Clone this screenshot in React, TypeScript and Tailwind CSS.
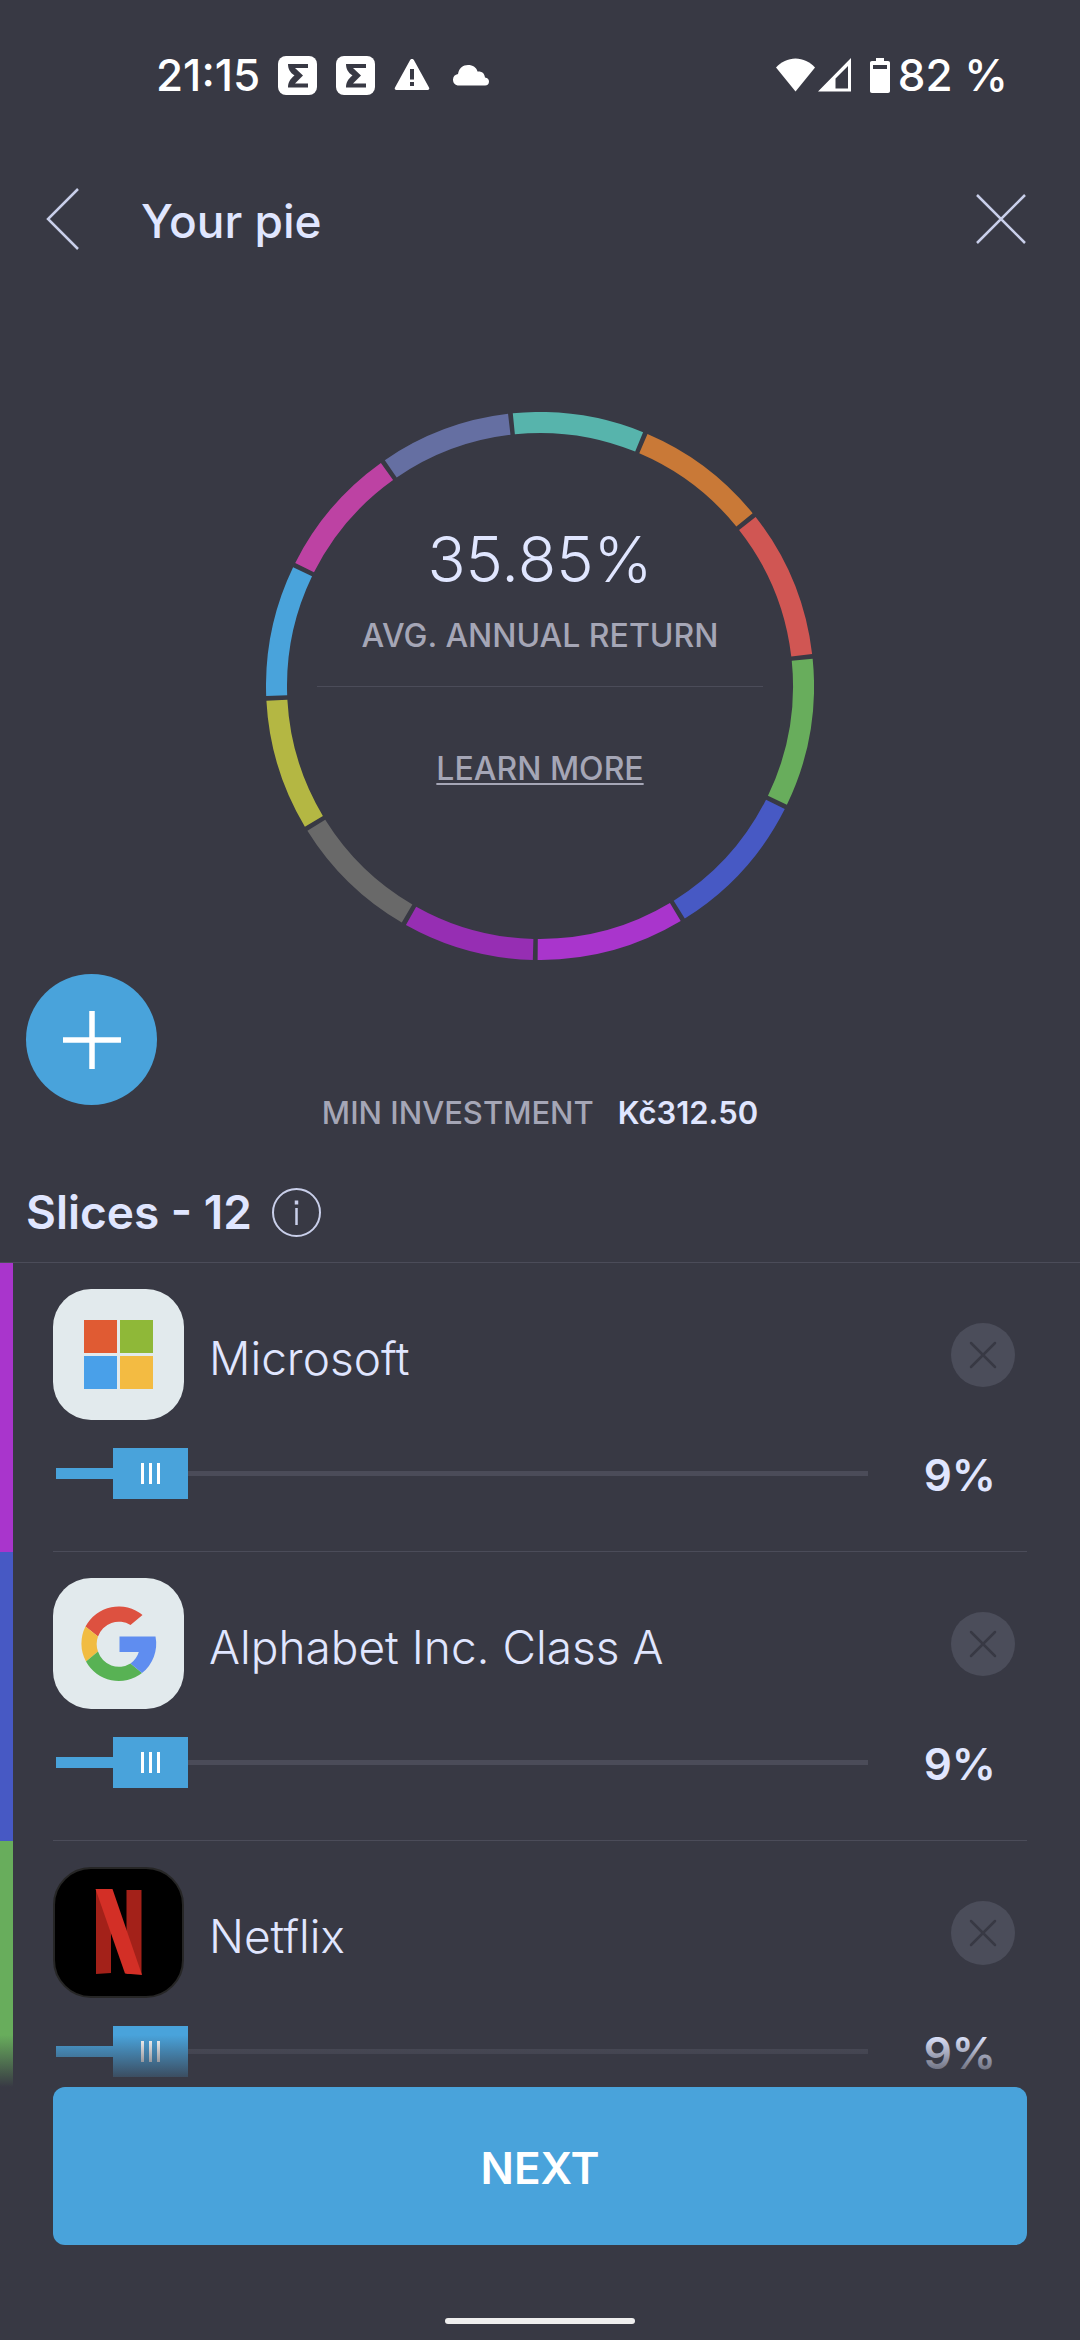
import { useState, type ReactNode } from 'react'

const pieSlices = [
  { color: '#a935cc', share: 9 },
  { color: '#4759c4', share: 9 },
  { color: '#68ad5c', share: 9 },
  { color: '#d05653', share: 9 },
  { color: '#c97937', share: 8 },
  { color: '#57b4ac', share: 8 },
  { color: '#656fa2', share: 8 },
  { color: '#bd42a3', share: 8 },
  { color: '#49a3db', share: 8 },
  { color: '#b4b743', share: 8 },
  { color: '#696969', share: 8 },
  { color: '#962eb3', share: 8 },
]

function StatusBar() {
  return (
    <div className="flex h-[150px] shrink-0 items-center justify-between pl-[156px] pr-[72px] text-white">
      <div className="flex items-center">
        <span className="mr-[18px] text-[44px] leading-none font-medium">21:15</span>
        <SigmaIcon />
        <SigmaIcon />
        <svg className="mr-[22px]" width="36" height="32" viewBox="0 0 36 32" fill="currentColor" aria-hidden="true">
          <path fillRule="evenodd" d="M18 0c1 0 1.500 .4 2 1.200L35 28.500c.8 1.500 0 2.500-1.500 2.500h-31C1 31 .2 30 1 28.500L16 1.200C16.500 .4 17 0 18 0zM16 10v10.500h4V10zM16 23v4h4v-4z" />
        </svg>
        <svg width="38" height="22" viewBox="0 0 38 22" fill="currentColor" aria-hidden="true">
          <path d="M7 21.500C3 21.500 1 19 1 15.500c0-3 2-5 5-5.500C7 4 11 1 16 1c5 0 8.500 2.500 9.500 6.500 4-.5 7 1.500 7.500 6 2.500 .3 4 1.800 4 4 0 2.500-1.500 4-4 4z" />
        </svg>
      </div>
      <div className="flex items-center">
        <svg className="mr-[3px]" width="39" height="34" viewBox="0 0 39 34" fill="currentColor" aria-hidden="true">
          <path d="M19.500 33.500 0 9.500C5 4 12 .5 19.500 .5S34 4 39 9.500z" />
        </svg>
        <svg className="mr-[19px]" width="33" height="34" viewBox="0 0 33 34" fill="currentColor" aria-hidden="true">
          <path fillRule="evenodd" d="M33 0v33.500H0zM30 8 17.500 20.500V30.500H30z" />
        </svg>
        <svg className="mr-2" width="20" height="35" viewBox="0 0 20 35" fill="currentColor" aria-hidden="true">
          <path fillRule="evenodd" d="M6 0h8v3h4c1.300 0 2 .7 2 2v28c0 1.300-.7 2-2 2H2c-1.300 0-2-.7-2-2V5c0-1.300 .7-2 2-2h4zM3 7v4h14V7z" />
        </svg>
        <span className="text-[44px] leading-none font-medium">82 %</span>
      </div>
    </div>
  )
}

function SigmaIcon() {
  return (
    <svg className="mr-[19px]" width="39" height="39" viewBox="0 0 39 39" aria-hidden="true">
      <rect width="39" height="39" rx="8" fill="#fff" />
      <path d="M10 8h20v4H17l8 7.500-8 8h13v4H10c0-5 2-8.500 6.500-12C12 16.500 10 13 10 8z" fill="#383944" />
    </svg>
  )
}

function Header() {
  return (
    <header className="flex h-[138px] shrink-0 items-center pl-[46px] pr-[54px] text-[#c9cfea]">
      <button type="button" aria-label="Back">
        <svg width="34" height="62" viewBox="0 0 34 62" fill="none" stroke="currentColor" strokeWidth="2.500">
          <path d="M32 1 2 31l30 30" />
        </svg>
      </button>
      <h1 className="ml-[61px] grow pt-1 text-[46px] leading-[56px] font-medium text-[#e0e6ff]">Your pie</h1>
      <button type="button" aria-label="Close">
        <svg width="50" height="50" viewBox="0 0 50 50" fill="none" stroke="currentColor" strokeWidth="2.500">
          <path d="m1 1 48 48M49 1 1 49" />
        </svg>
      </button>
    </header>
  )
}

function PieChart() {
  // slices run counter-clockwise from the bottom, angles in degrees
  let start = -1
  const arcs = pieSlices.map((slice) => {
    const from = start + 0.5
    start += slice.share * 3.6
    const to = start - 0.5
    const point = (deg: number) => {
      const rad = (deg * Math.PI) / 180
      return `${(274 + 263.5 * Math.sin(rad)).toFixed(2)} ${(274 + 263.5 * Math.cos(rad)).toFixed(2)}`
    }
    return { color: slice.color, d: `M${point(from)}A263.5 263.5 0 0 0 ${point(to)}` }
  })

  return (
    <div className="mt-[124px] grid shrink-0 place-items-center">
      <svg className="[grid-area:1/1]" width="548" height="548" viewBox="0 0 548 548" fill="none" strokeWidth="21" aria-hidden="true">
        {arcs.map((arc) => (
          <path key={arc.color} d={arc.d} stroke={arc.color} />
        ))}
      </svg>
      <div className="flex w-[446px] flex-col items-center self-start pt-[107px] [grid-area:1/1]">
        <p className="text-[63px] leading-[80px] font-light text-[#e0e6ff]">35.85%</p>
        <p className="mt-[17px] text-[32px] leading-[40px] font-medium text-[#a5a6b6]">AVG. ANNUAL RETURN</p>
        <hr className="mt-[30px] w-full border-[#4b4c59]" />
        <a href="#learn-more" className="mt-[62px] text-[32px] leading-[40px] font-medium text-[#a5a6b6] underline decoration-2 underline-offset-3">LEARN MORE</a>
      </div>
    </div>
  )
}

function SliceRow({ name, color, logo }: { name: string; color: string; logo: ReactNode }) {
  const [value, setValue] = useState(9)

  return (
    <li className="flex">
      <span className="w-[13px] shrink-0" style={{ backgroundColor: color }} />
      <div className="ml-10 mr-[53px] grow border-b border-[#4b4c59] pt-[26px] pb-[52px]">
        <div className="flex items-center">
          {logo}
          <h3 className="ml-[25px] grow pt-[6px] text-[46px] leading-[56px] font-light text-[#e0e6ff]">{name}</h3>
          <button type="button" aria-label={`Remove ${name}`} className="mr-3 flex size-16 items-center justify-center rounded-full bg-[#4b4d5a] text-[#383944]">
            <svg width="28" height="28" viewBox="0 0 28 28" fill="none" stroke="currentColor" strokeWidth="2.500" strokeLinecap="round">
              <path d="m2 2 24 24M26 2 2 26" />
            </svg>
          </button>
        </div>
        <div className="mt-7 flex items-center">
          <div className="grid grow items-center">
            <div className="ml-[3px] h-[5px] bg-[#4b4c59] [grid-area:1/1]" />
            <div className="ml-[3px] h-[11px] bg-[#49a3db] [grid-area:1/1]" style={{ width: `${value}%` }} />
            <input
              type="range"
              min={1}
              max={100}
              value={value}
              onChange={(e) => setValue(Number(e.target.value))}
              aria-label={`${name} share`}
              className="h-[51px] w-full appearance-none bg-transparent [grid-area:1/1] [&::-webkit-slider-thumb]:h-[51px] [&::-webkit-slider-thumb]:w-[75px] [&::-webkit-slider-thumb]:appearance-none [&::-webkit-slider-thumb]:bg-[#49a3db] [&::-webkit-slider-thumb]:bg-[linear-gradient(90deg,#fff_3px,transparent_3px,transparent_8px,#fff_8px,#fff_11px,transparent_11px,transparent_16px,#fff_16px)] [&::-webkit-slider-thumb]:bg-[length:19px_21px] [&::-webkit-slider-thumb]:bg-center [&::-webkit-slider-thumb]:bg-no-repeat"
            />
          </div>
          <span className="w-[159px] pr-[31px] pt-1 text-right text-[44px] leading-[47px] font-semibold text-[#e0e6ff]">{value}%</span>
        </div>
      </div>
    </li>
  )
}

function MicrosoftLogo() {
  return (
    <svg className="shrink-0" width="131" height="131" viewBox="0 0 131 131" aria-hidden="true">
      <rect width="131" height="131" rx="38" fill="#e2eaed" />
      <path d="M31 31h33v33H31z" fill="#e05b33" />
      <path d="M67 31h33v33H67z" fill="#8fb838" />
      <path d="M31 67h33v33H31z" fill="#49a0e9" />
      <path d="M67 67h33v33H67z" fill="#f3bb42" />
    </svg>
  )
}

function GoogleLogo() {
  return (
    <svg className="shrink-0" width="131" height="131" viewBox="-65.5 -65.5 131 131" aria-hidden="true">
      <rect x="-65.5" y="-65.5" width="131" height="131" rx="38" fill="#e2eaed" />
      <path d="M-33-17A37.500 37.500 0 0 1 24-28.500L12-18.500A22 22 0 0 0-20.500-7z" fill="#dd5140" />
      <path d="M-33-17A37.500 37.500 0 0 0-32.500 18L-20.500 8A22 22 0 0 1-20.500-7z" fill="#f1bc42" />
      <path d="M-32.500 18A37.500 37.500 0 0 0 23.500 29.500L12 20A22 22 0 0 1-20.500 8z" fill="#58b254" />
      <path d="M1-7H37A37.500 37.500 0 0 1 23.500 29.500L12 20A22 22 0 0 0 20.300 8.500H1z" fill="#5f8df0" />
    </svg>
  )
}

function NetflixLogo() {
  return (
    <svg className="shrink-0" width="131" height="131" viewBox="0 0 131 131" aria-hidden="true">
      <rect x="1" y="1" width="129" height="129" rx="37" fill="#000" stroke="#262626" strokeWidth="2" />
      <path d="M43 22h15v84l-15 1z" fill="#a32119" />
      <path d="M73.500 23h15v84h-15z" fill="#a32119" />
      <path d="M42.500 22h17L89 108l-17-1.500z" fill="#d32f26" />
    </svg>
  )
}

export default function App() {
  return (
    <div className="flex h-screen flex-col bg-[#383944] font-['Inter','Liberation_Sans',sans-serif]">
      <StatusBar />
      <Header />
      <PieChart />

      <div className="grid shrink-0 pt-[14px]">
        <button type="button" aria-label="Add slice" className="mb-[27px] ml-[26px] flex size-[131px] items-center justify-center rounded-full bg-[#49a3db] [grid-area:1/1]">
          <svg width="58" height="58" viewBox="0 0 58 58" stroke="#fff" strokeWidth="5.500" aria-hidden="true">
            <path d="M29 0v58M0 29h58" />
          </svg>
        </button>
        <p className="flex gap-6 self-end justify-self-center text-[31px] leading-[38px] [grid-area:1/1]">
          <span className="font-medium text-[#a5a6b6]">MIN INVESTMENT</span>
          <span className="font-semibold text-[#e0e6ff]">Kč312.50</span>
        </p>
      </div>

      <div className="flex shrink-0 items-center border-b border-[#4b4c59] pt-14 pb-[25px] pl-[26px]">
        <h2 className="text-[46px] leading-[49px] font-semibold text-[#e0e6ff]">Slices - 12</h2>
        <button type="button" aria-label="About slices" className="ml-5 text-[#c9cfea]">
          <svg width="49" height="49" viewBox="0 0 49 49" fill="none" stroke="currentColor" strokeWidth="2">
            <circle cx="24.500" cy="24.500" r="23.500" />
            <path d="M24.500 20v17" strokeWidth="2.500" />
            <path d="M24.500 12.500v4" strokeWidth="3.500" />
          </svg>
        </button>
      </div>

      <div className="relative min-h-0 grow overflow-hidden">
        <ul className="h-full overflow-y-auto [scrollbar-width:none]">
          <SliceRow name="Microsoft" color="#a935cc" logo={<MicrosoftLogo />} />
          <SliceRow name="Alphabet Inc. Class A" color="#4759c4" logo={<GoogleLogo />} />
          <SliceRow name="Netflix" color="#68ad5c" logo={<NetflixLogo />} />
        </ul>
        <div className="pointer-events-none absolute inset-x-0 bottom-0 h-[52px] bg-linear-to-t from-[#383944] to-[#38394400]" />
      </div>

      <footer className="flex shrink-0 flex-col px-[53px] pb-4">
        <button type="button" className="h-[158px] rounded-xl bg-[#49a3db] pt-1 text-[44px] font-semibold text-white">NEXT</button>
        <div className="mt-[73px] h-[6px] w-[190px] self-center rounded-full bg-[#eeeeee]" />
      </footer>
    </div>
  )
}
